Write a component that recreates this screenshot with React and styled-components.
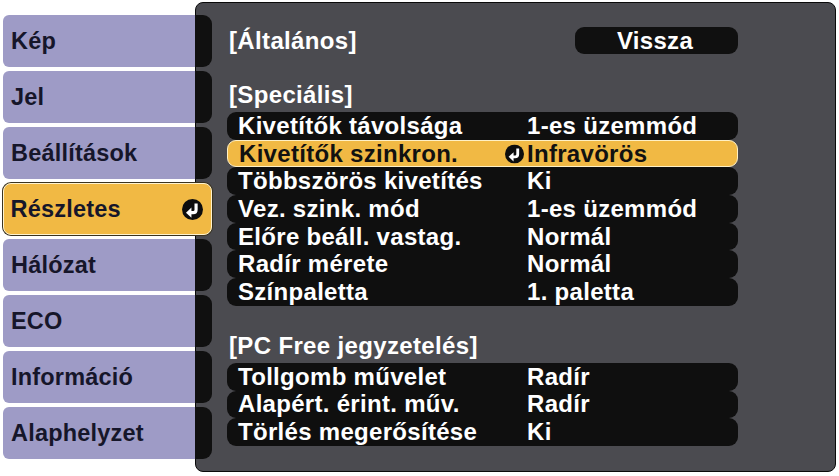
import React from "react";
import styled, { createGlobalStyle } from "styled-components";

const GlobalStyle = createGlobalStyle`
  html, body {
    margin: 0;
    padding: 0;
    background: #ffffff;
  }
  body {
    font-family: "Liberation Sans", Arial, sans-serif;
    font-weight: 700;
  }
`;

const Screen = styled.div`
  display: flex;
  align-items: flex-start;
  width: 839px;
  height: 476px;
  padding: 2px 0 0 3px;
  box-sizing: border-box;
`;

const Sidebar = styled.nav`
  position: relative;
  z-index: 1;
  width: 209px;
  flex-shrink: 0;
  padding-top: 13px;
  display: flex;
  flex-direction: column;
  gap: 4px;
`;

const Tab = styled.div`
  height: 52px;
  display: flex;
  box-sizing: border-box;
  ${({ $active }) =>
    $active &&
    `
    background: #f1b944;
    border: 1.5px solid #fff3cf;
    border-radius: 8px;
    box-shadow: 0 0 0 1px #3a3320;
  `}
`;

const TabLabel = styled.div`
  width: ${({ $active }) => ($active ? "auto" : "192px")};
  flex: ${({ $active }) => ($active ? "1" : "none")};
  display: flex;
  align-items: center;
  justify-content: space-between;
  padding: 0 8px 0 ${({ $active }) => ($active ? "6.5px" : "8px")};
  box-sizing: border-box;
  background: ${({ $active }) => ($active ? "transparent" : "#9e9bc6")};
  border-radius: 6px 0 0 6px;
  color: #16162a;
  font-size: 23.5px;
  letter-spacing: 0.2px;
`;

const TabEdge = styled.div`
  flex: 1;
  background: #101010;
  border-radius: 0 9px 9px 0;
`;

const Panel = styled.main`
  margin-left: -17px;
  width: 641px;
  height: 470px;
  box-sizing: border-box;
  background: #4b4b50;
  border: 1px solid #0a0a0a;
  border-radius: 8px;
  padding: 24px 0 0 31px;
  color: #ffffff;
`;

const HeaderRow = styled.div`
  width: 511px;
  height: 27px;
  display: flex;
  align-items: center;
  justify-content: space-between;
`;

const SectionTitle = styled.div`
  font-size: 24px;
  line-height: 26px;
  height: 26px;
  padding-left: 2px;
  margin-top: ${({ $top }) => $top}px;
  letter-spacing: 0.35px;
  white-space: nowrap;
`;

const BackButton = styled.div`
  width: 163px;
  height: 27px;
  background: #101010;
  border-radius: 9px;
  display: flex;
  align-items: center;
  justify-content: center;
  font-size: 24px;
  letter-spacing: 0.3px;
  padding-right: 3px;
  box-sizing: border-box;
`;

const List = styled.div`
  margin-top: 4px;
  width: 511px;
  display: flex;
  flex-direction: column;
`;

const Row = styled.div`
  height: 27.7px;
  display: flex;
  align-items: center;
  box-sizing: border-box;
  padding-left: 11px;
  border-radius: 9px;
  font-size: 24px;
  letter-spacing: 0.3px;
  white-space: nowrap;
  background: ${({ $active }) => ($active ? "#f1b944" : "#0f0f0f")};
  color: ${({ $active }) => ($active ? "#111111" : "#ffffff")};
  border: ${({ $active }) => ($active ? "1px solid #fff0c4" : "none")};
`;

const RowLabel = styled.span`
  width: ${({ $active }) => ($active ? "288px" : "289px")};
  flex-shrink: 0;
`;

const RowValue = styled.span`
  position: relative;
`;

const ValueMark = styled.span`
  position: absolute;
  left: -22px;
  top: 50%;
  transform: translateY(-50%);
  display: flex;
`;

const EnterIcon = ({ size = 20 }) => (
  <svg width={size} height={size} viewBox="0 0 20 20">
    <circle cx="10" cy="10" r="10" fill="#0d0d0d" />
    <path
      d="M13.4 4.2 V10.2 Q13.4 13 10.6 13 H8"
      stroke="#ffffff"
      strokeWidth="3"
      fill="none"
      strokeLinecap="butt"
    />
    <polygon points="3.8,13 9,8.2 9,17.8" fill="#ffffff" />
  </svg>
);

const menu = [
  "Kép",
  "Jel",
  "Beállítások",
  "Részletes",
  "Hálózat",
  "ECO",
  "Információ",
  "Alaphelyzet",
];

const special = [
  ["Kivetítők távolsága", "1-es üzemmód"],
  ["Kivetítők szinkron.", "Infravörös", true],
  ["Többszörös kivetítés", "Ki"],
  ["Vez. szink. mód", "1-es üzemmód"],
  ["Előre beáll. vastag.", "Normál"],
  ["Radír mérete", "Normál"],
  ["Színpaletta", "1. paletta"],
];

const pcFree = [
  ["Tollgomb művelet", "Radír"],
  ["Alapért. érint. műv.", "Radír"],
  ["Törlés megerősítése", "Ki"],
];

const SettingRows = ({ items }) => (
  <List>
    {items.map(([label, value, active]) => (
      <Row key={label} $active={active}>
        <RowLabel $active={active}>{label}</RowLabel>
        <RowValue>
          {active && (
            <ValueMark>
              <EnterIcon size={19} />
            </ValueMark>
          )}
          {value}
        </RowValue>
      </Row>
    ))}
  </List>
);

export default function App() {
  return (
    <>
      <GlobalStyle />
      <Screen>
        <Sidebar>
          {menu.map((name) => {
            const active = name === "Részletes";
            return (
              <Tab key={name} $active={active}>
                <TabLabel $active={active}>
                  {name}
                  {active && <EnterIcon size={21} />}
                </TabLabel>
                {!active && <TabEdge />}
              </Tab>
            );
          })}
        </Sidebar>
        <Panel>
          <HeaderRow>
            <SectionTitle $top={0}>[Általános]</SectionTitle>
            <BackButton>Vissza</BackButton>
          </HeaderRow>
          <SectionTitle $top={28}>[Speciális]</SectionTitle>
          <SettingRows items={special} />
          <SectionTitle $top={27}>[PC Free jegyzetelés]</SectionTitle>
          <SettingRows items={pcFree} />
        </Panel>
      </Screen>
    </>
  );
}
